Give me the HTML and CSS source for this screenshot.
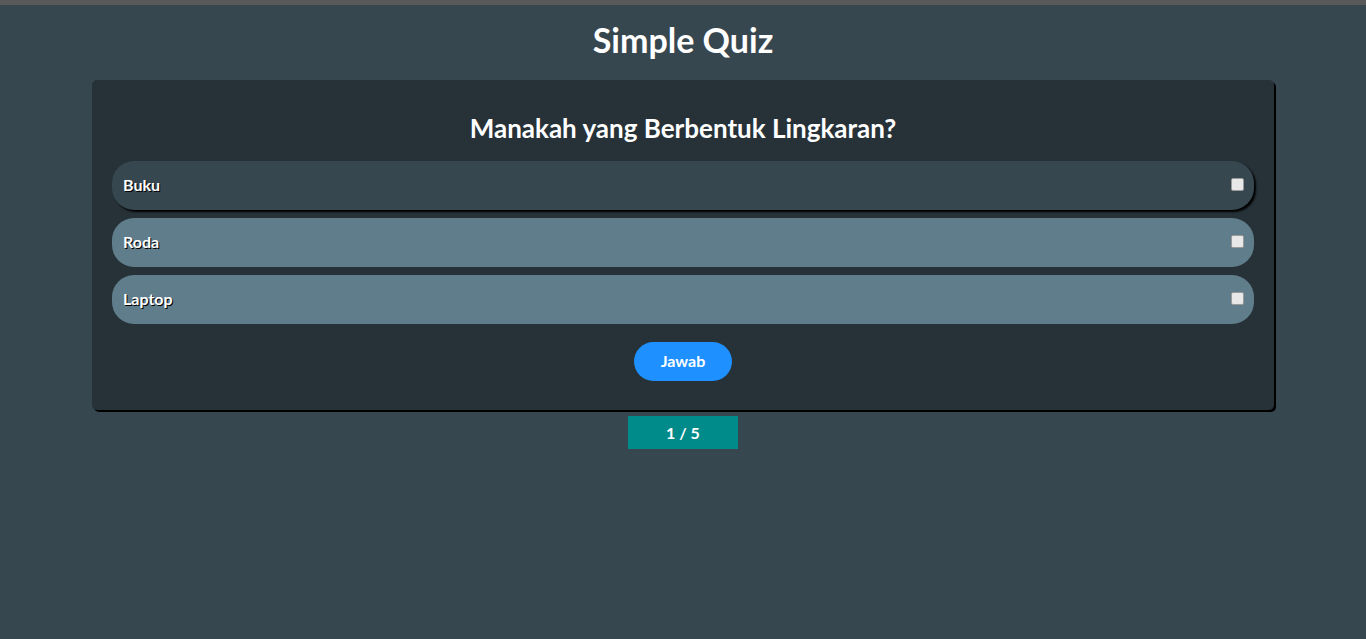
FILE: index.html
```html
<!DOCTYPE html>
<html lang="id">
<head>
<meta charset="utf-8">
<title>Simple Quiz</title>
<link rel="stylesheet" href="styles.css">
</head>
<body>
<div class="topbar"></div>
<h1 class="title">Simple Quiz</h1>
<div class="card">
  <h2 class="question">Manakah yang Berbentuk Lingkaran?</h2>
  <div class="options">
    <label class="option option-active"><span>Buku</span><span class="box"></span></label>
    <label class="option"><span>Roda</span><span class="box"></span></label>
    <label class="option"><span>Laptop</span><span class="box"></span></label>
  </div>
  <div class="actions"><button class="btn">Jawab</button></div>
</div>
<div class="counter-wrap"><div class="counter">1 / 5</div></div>
</body>
</html>
```
FILE: styles.css
```css
* { box-sizing: border-box; }
html, body { margin: 0; padding: 0; }
body {
  background: #37474f;
  color: #fff;
  font-family: "Comic Sans MS", "Lato", sans-serif;
  min-height: 639px;
}
.topbar { height: 5px; background: #595959; }
.title {
  margin: 0;
  padding-top: 16px;
  height: 75px;
  text-align: center;
  font-size: 34px;
  line-height: 38px;
  font-weight: bold;
}
.card {
  margin: 0 92px;
  background: #263238;
  border-radius: 5px;
  box-shadow: 2px 2px 0 #000;
  padding: 34px 20px 29px;
}
.question {
  margin: 0 0 19px;
  text-align: center;
  font-size: 26px;
  line-height: 28px;
  font-weight: bold;
}
.options { display: flex; flex-direction: column; gap: 8px; }
.option {
  height: 49px;
  border-radius: 22px;
  background: #607d8b;
  display: flex;
  align-items: center;
  justify-content: space-between;
  padding: 0 11px 2px;
  font-size: 16px;
  font-weight: bold;
  text-shadow: 1px 1px 0 #000;
}
.option-active {
  background: #37474f;
  box-shadow: 2px 2px 2px #000;
}
.box {
  width: 13px;
  height: 13px;
  background: #e8e8e8;
  border: 1px solid #9a9a9a;
  border-radius: 2px;
  margin-right: -1px;
}
.actions { display: flex; justify-content: center; margin-top: 18px; }
.btn {
  width: 98px;
  height: 39px;
  border: none;
  border-radius: 20px;
  background: #1e90ff;
  color: #fff;
  font-family: inherit;
  font-size: 16px;
  font-weight: bold;
  padding: 0 0 2px;
}
.counter-wrap { display: flex; justify-content: center; margin-top: 6px; }
.counter {
  width: 110px;
  height: 33px;
  background: #008b8b;
  display: flex;
  align-items: center;
  justify-content: center;
  font-size: 16px;
  font-weight: bold;
  padding-bottom: 1px;
}
```
